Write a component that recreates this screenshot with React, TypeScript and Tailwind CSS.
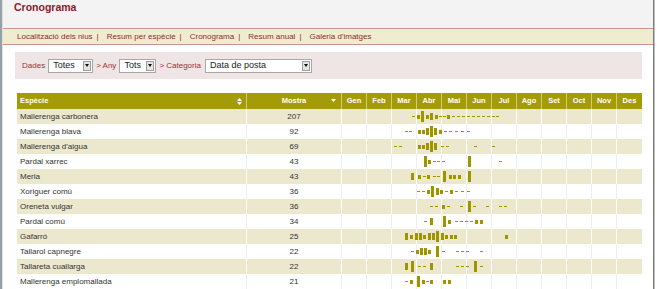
import React from "react";

const MONTHS = ["Gen", "Feb", "Mar", "Abr", "Mai", "Jun", "Jul", "Ago", "Set", "Oct", "Nov", "Des"];

type Row = { name: string; n: number; bars: string };

const ROWS: Row[] = [
  {
    name: "Mallerenga carbonera",
    n: 207,
    bars: "71d 76s 80.5t 85s 89.5m 94s 98.5d 102.5d 106.5s 111d 116d 121d 126d 131d 136d 141d 146d 151d 155d",
  },
  { name: "Mallerenga blava", n: 92, bars: "64d 68.5d 77s 81s 85.5m 89.5t 93.5m 98s 103d 108d 114d 120d 126d" },
  { name: "Mallerenga d'aigua", n: 69, bars: "53d 58.5d 77s 81.3s 85.5m 89.6t 93.8m 100d 105d 133d 151.5d" },
  { name: "Pardal xarrec", n: 43, bars: "83t 87.5s 92d 96.5d 101d 127.5t 158.5d" },
  { name: "Merla", n: 43, bars: "70.8m 77s 82d 86s 92d 96.5d 102.7t 108s 112.3s 117s 127.5t" },
  { name: "Xoriguer comú", n: 36, bars: "76.5d 81d 86s 90.5t 95m 99.5s 104d 109s 114d 120d 126d" },
  { name: "Oreneta vulgar", n: 36, bars: "89.5d 94d 101.7s 106.3d 119.5d 127.5t 132.7d 145.7d 158d 163.8d" },
  { name: "Pardal comú", n: 34, bars: "83.3d 89m 102.5t 107.8s 114d 119d 124d 129d 134s 139s" },
  { name: "Gafarró", n: 25, bars: "64.7m 69.3s 74m 78.3m 82.5s 87m 91.5m 95.8t 100m 104.5s 109s 113.5s 164.2s" },
  { name: "Tallarol capnegre", n: 22, bars: "70.7d 75s 79.5m 83.3m 87.3s 95.5t 101.5d 115d 120d 125d 139d" },
  { name: "Tallareta cuallarga", n: 22, bars: "64.8m 70t 77d 82d 89m 115d 120d 125d 133t 139d" },
  { name: "Mallerenga emplomallada", n: 21, bars: "64.7d 69.7s 76.3t 81.3s 85.7d 89.7s 102.7s 107.5s" },
];

const DIMS: Record<string, [number, number, number]> = {
  t: [3, 11, 2],
  m: [3, 7, 4],
  s: [3, 4, 6],
  d: [3, 1, 7],
};

function Bars({ spec }: { spec: string }) {
  const items = spec.split(" ").map((tok) => {
    const type = tok.slice(-1);
    const cx = parseFloat(tok.slice(0, -1));
    return { cx, type };
  });
  return (
    <svg
      className="absolute inset-0 pointer-events-none"
      width="300"
      height="15"
      viewBox="0 0 300 15"
      shapeRendering="crispEdges"
    >
      {items.map((b, i) => {
        const [w, h, y] = DIMS[b.type];
        return (
          <rect key={i} x={Math.round(b.cx - w / 2)} y={y} width={w} height={h} fill="#9f9500" />
        );
      })}
    </svg>
  );
}

function Select({ text, className }: { text: string; className: string }) {
  return (
    <div
      className={`relative h-[14px] bg-white border border-[#a7a7a7] flex items-center pl-[4px] text-[9px] text-[#222] ${className}`}
    >
      <span className="leading-none">{text}</span>
      <div className="absolute right-[1px] top-[1px] bottom-[1px] w-[8px] bg-[#e4e4e4] border border-[#9d9d9d] flex items-center justify-center">
        <svg width="4" height="3" viewBox="0 0 4 3">
          <path d="M0 0 H4 L2 3 Z" fill="#111" />
        </svg>
      </div>
    </div>
  );
}

export default function App() {
  return (
    <div className="w-[657px] h-[289px] overflow-hidden bg-white flex font-['Liberation_Sans',Arial,sans-serif]">
      <div className="w-[2px] bg-[#94a1a7] shrink-0" />
      <div className="w-[1px] bg-[#dde1e3] shrink-0" />
      <div className="w-[650px] shrink-0 flex flex-col">
        {/* title bar */}
        <div className="h-[28px] bg-[#f3f3f3] pl-[11px]">
          <div className="text-[10.5px] leading-[15px] font-bold text-[#8b1a2c]">Cronograma</div>
        </div>
        {/* nav */}
        <div className="h-[18px] border-y border-[#c9958c] bg-[#efecd0] flex items-center pl-[14px] text-[8px] text-[#8c2f22]">
          <span>Localització dels nius</span>
          <span className="ml-[4px] mr-[8px]">|</span>
          <span>Resum per espècie</span>
          <span className="ml-[4px] mr-[8px]">|</span>
          <span>Cronograma</span>
          <span className="ml-[4px] mr-[8px]">|</span>
          <span>Resum anual</span>
          <span className="ml-[4px] mr-[8px]">|</span>
          <span>Galeria d'imatges</span>
        </div>
        {/* filter */}
        <div className="mt-[7px] ml-[12px] w-[627px] h-[27px] bg-[#efe5e5] flex items-center pl-[7px] gap-[3px] text-[8px] text-[#a02f37]">
          <span>Dades</span>
          <Select text="Totes" className="w-[45px]" />
          <span>&gt; Any</span>
          <Select text="Tots" className="w-[37px]" />
          <span className="mr-[1px]">&gt; Categoria</span>
          <Select text="Data de posta" className="w-[107px]" />
        </div>
        {/* table */}
        <div className="mt-[14px] ml-[14px] w-[625px] flex flex-col">
          <div className="flex h-[16px] bg-[#a49b06] text-white font-bold text-[7.5px]">
            <div className="w-[230px] border-r border-[#cfca84] flex items-center justify-between pl-[3px] pr-[4px]">
              <span>Espècie</span>
              <svg width="5" height="7" viewBox="0 0 5 7">
                <path d="M0 3 L2.5 0 L5 3 Z" fill="#fff" />
                <path d="M0 4 L2.5 7 L5 4 Z" fill="#fff" />
              </svg>
            </div>
            <div className="w-[95px] border-r border-[#cfca84] relative flex items-center justify-center">
              <span>Mostra</span>
              <svg className="absolute right-[5px] top-[6px]" width="5" height="3" viewBox="0 0 5 3">
                <path d="M0 0 H5 L2.5 3 Z" fill="#fff" />
              </svg>
            </div>
            {MONTHS.map((m, i) => (
              <div
                key={m}
                className={`w-[25px] flex items-center justify-center ${i < 11 ? "border-r border-[#cfca84]" : ""}`}
              >
                {m}
              </div>
            ))}
          </div>
          {ROWS.map((r, ri) => {
            const cream = ri % 2 === 0;
            const bg = cream ? "bg-[#ebe8cd]" : "bg-white";
            const br = cream ? "border-white" : "border-[#efefef]";
            return (
              <div key={r.name} className={`flex h-[15px] text-[8px] text-[#333] ${bg}`}>
                <div className={`w-[230px] border-r ${br} flex items-center pl-[3px]`}>{r.name}</div>
                <div className={`w-[95px] border-r ${br} flex items-center justify-center`}>{r.n}</div>
                <div className="relative w-[300px] flex">
                  {MONTHS.map((m, i) => (
                    <div key={m} className={`w-[25px] h-full ${i < 11 ? `border-r ${br}` : ""}`} />
                  ))}
                  <Bars spec={r.bars} />
                </div>
              </div>
            );
          })}
        </div>
      </div>
      <div className="w-[1px] bg-[#7d7d7d] shrink-0" />
      <div className="w-[1px] bg-[#bdbdbd] shrink-0" />
      <div className="w-[2px] bg-white shrink-0" />
    </div>
  );
}
